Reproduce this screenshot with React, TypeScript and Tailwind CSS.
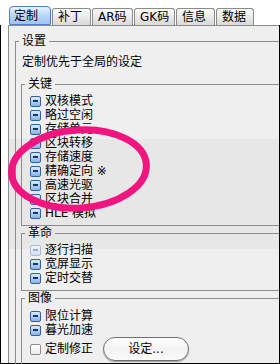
import React from "react";

type TabItem = { label: string; w: string; active?: boolean };

const tabs: TabItem[] = [
  { label: "定制", w: "w-[42px]", active: true },
  { label: "补丁", w: "w-[39px]" },
  { label: "AR码", w: "w-[41px]" },
  { label: "GK码", w: "w-[41px]" },
  { label: "信息", w: "w-[39px]" },
  { label: "数据", w: "w-[38px]" },
];

type BoxState = "on" | "dim" | "off";

const Box = ({ state }: { state: BoxState }) => {
  if (state === "off") {
    return (
      <span className="w-[11px] h-[11px] shrink-0 rounded-[2px] border border-[#8d8d8d] bg-gradient-to-b from-white to-[#ececec]" />
    );
  }
  const dim = state === "dim";
  return (
    <span
      className={`w-[11px] h-[11px] shrink-0 rounded-[2px] border flex items-center justify-center ${
        dim
          ? "border-[#a9bcd6] bg-gradient-to-b from-[#f1f5fb] to-[#d3e0f1]"
          : "border-[#35619f] bg-gradient-to-b from-[#dcebfb] to-[#86b3ea]"
      }`}
    >
      <span className={`w-[5px] h-[2px] ${dim ? "bg-[#9aaecb]" : "bg-[#1c3865]"}`} />
    </span>
  );
};

const Row = ({ label, state = "on" }: { label: string; state?: BoxState }) => (
  <div className="h-[14px] flex items-center gap-[4px] pl-[8px]">
    <Box state={state} />
    <span className="leading-[14px] whitespace-nowrap">{label}</span>
  </div>
);

const Group = ({
  title,
  children,
  bottom = true,
}: {
  title: string;
  children: React.ReactNode;
  bottom?: boolean;
}) => (
  <fieldset
    className={`ml-[5px] min-w-0 border-l border-t border-[#8c8c8c] pb-[5px] ${
      bottom ? "border-b" : ""
    }`}
  >
    <legend className="ml-[3px] px-[3px] leading-[14px]">{title}</legend>
    <div className="pt-[3px]">{children}</div>
  </fieldset>
);

const keys = [
  "双核模式",
  "略过空闲",
  "存储单元",
  "区块转移",
  "存储速度",
  "精确定向 ※",
  "高速光驱",
  "区块合并",
  "HLE 模拟",
];

export default function App() {
  return (
    <div className="w-[280px] h-[364px] bg-white relative overflow-hidden text-[12px] text-black font-['DejaVu_Sans','Noto_Sans_CJK_SC',sans-serif]">
      {/* tab strip */}
      <div className="h-[25px] flex items-end gap-[1px] pl-[9px]">
        {tabs.map((t) =>
          t.active ? (
            <div
              key={t.label}
              className={`${t.w} h-[19px] pl-[4px] flex items-center rounded-t-[4px] rounded-b-[1px] border border-[#4f7fc4] bg-gradient-to-b from-[#eaf3fd] via-[#b9d7f6] to-[#9cc5f0] leading-[14px]`}
            >
              {t.label}
            </div>
          ) : (
            <div
              key={t.label}
              className={`${t.w} h-[17px] pl-[5px] flex items-center rounded-t-[3px] border border-b-0 border-[#8b8b8b] bg-gradient-to-b from-[#fbfbfb] to-[#d9d9d9] leading-[14px]`}
            >
              {t.label}
            </div>
          )
        )}
      </div>

      {/* frame */}
      <div className="h-[339px] border-l border-r border-b border-black pl-[7px]">
        <div className="h-full border-l border-t border-[#8c8c8c] bg-[linear-gradient(#efefef_113px,#e7e7e7_113px,#e7e7e7_223px,#efefef_223px)]">
          <fieldset className="ml-[6px] mt-[8px] min-w-0 border-l border-t border-[#8c8c8c]">
            <legend className="ml-[3px] px-[3px] leading-[14px]">设置</legend>
            <div className="mt-[7px] pl-[6px] h-[14px] leading-[14px]">
              定制优先于全局的设定
            </div>

            <div className="mt-[8px]">
              <Group title="关键">
                {keys.map((k) => (
                  <Row key={k} label={k} />
                ))}
              </Group>
            </div>

            <Group title="革命">
              <Row label="逐行扫描" state="dim" />
              <Row label="宽屏显示" />
              <Row label="定时交替" />
            </Group>

            <Group title="图像" bottom={false}>
              <div className="pt-[1px]">
                <Row label="限位计算" />
                <Row label="暮光加速" />
                <div className="h-[24px] flex items-center gap-[4px] pl-[8px]">
                  <Box state="off" />
                  <span className="leading-[14px]">定制修正</span>
                  <button className="ml-[6px] w-[86px] h-[24px] rounded-full border border-[#6f6f6f] bg-gradient-to-b from-white via-[#f2f2f2] to-[#fbfbfb] shadow-[0_1px_1px_rgba(0,0,0,0.35)] leading-[14px] text-[12px]">
                    设定...
                  </button>
                </div>
              </div>
            </Group>
          </fieldset>
        </div>
      </div>

      {/* pink highlight ring */}
      <svg
        className="absolute top-0 left-0 pointer-events-none"
        width="280"
        height="364"
        viewBox="0 0 280 364"
      >
        <ellipse
          cx="79"
          cy="169"
          rx="67.5"
          ry="39"
          fill="none"
          stroke="#f2157f"
          strokeWidth="7"
          transform="rotate(-4 79 169)"
        />
      </svg>
    </div>
  );
}
